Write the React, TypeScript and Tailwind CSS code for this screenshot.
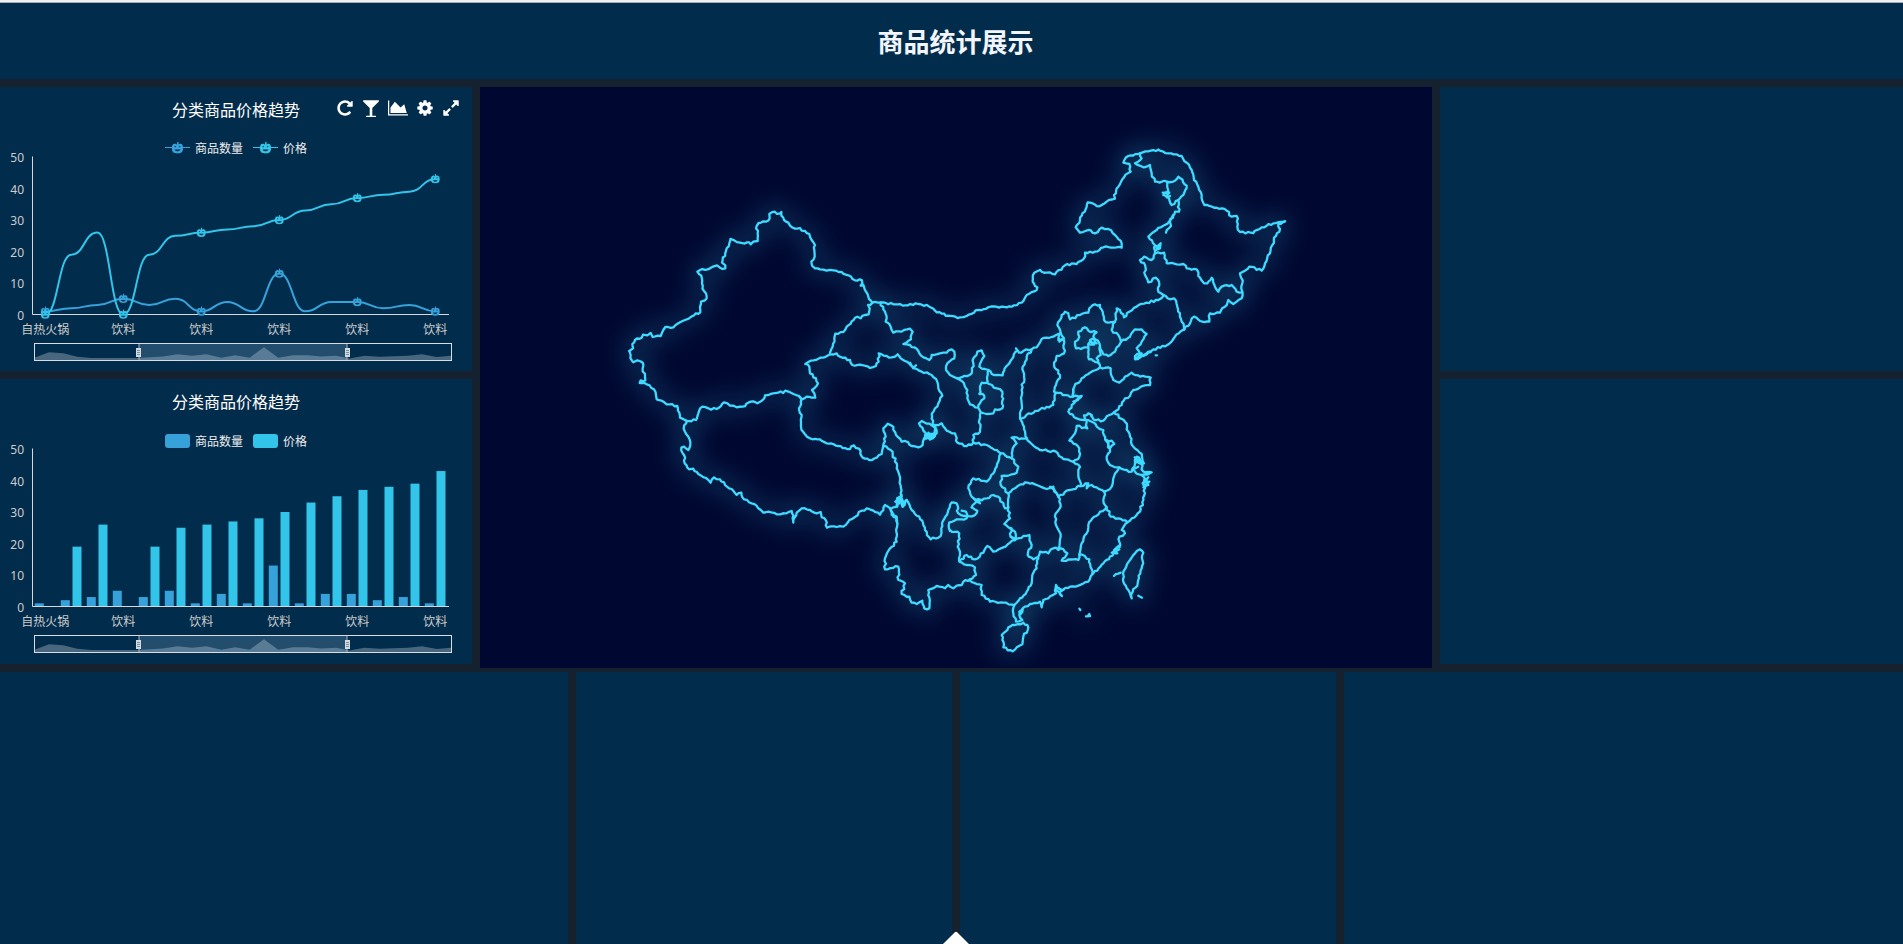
import React, { useState } from "react";

type Series = { name: string; color: string; values: number[] };

const SERIES: Series[] = [
  { name: "商品数量", color: "#37a2da", values: [1, 2, 3, 5, 3, 5, 1, 4, 1, 13, 1, 4, 4, 2, 3, 1] },
  { name: "价格", color: "#32c5e9", values: [0, 19, 26, 0, 19, 25, 26, 27, 28, 30, 33, 35, 37, 38, 39, 43] },
];
const LABELS = ["自热火锅", "饮料", "饮料", "饮料", "饮料", "饮料"];
const TICKS = [0, 10, 20, 30, 40, 50];

const BASE = 227.5;
const px = (i: number) => 45.3 + i * 26;
const py = (v: number) => BASE - v * 3.15;

/* ---------- toolbar icons ---------- */

const ICONS = [
  {
    label: "刷新",
    box: "0 0 1792 1792",
    cls: "w-[18px]",
    d: "M1664 256v448q0 26-19 45t-45 19h-448q-42 0-59-40-17-39 14-69l138-138q-148-137-349-137-104 0-198.500 40.500t-163.500 109.500-109.500 163.500-40.500 198.500 40.500 198.500 109.500 163.500 163.500 109.500 198.500 40.500q119 0 225-52t179-147q7-10 23-12 15 0 25 9l137 138q9 8 9.500 20.500t-7.500 22.500q-109 132-264 204.500t-327 72.500q-156 0-298-61t-245-164-164-245-61-298 61-298 164-245 245-164 298-61q147 0 284.500 55.500t244.500 156.500l130-129q29-31 70-14 39 17 39 59z",
  },
  {
    label: "筛选",
    box: "0 0 1792 1792",
    cls: "w-[18px]",
    d: "M1699 186q0 35-43 78l-632 632v768h320q26 0 45 19t19 45-19 45-45 19h-896q-26 0-45-19t-19-45 19-45 45-19h320v-768l-632-632q-43-43-43-78 0-23 18-36.500t38-17.500 43-4h1408q23 0 43 4t38 17.500 18 36.500z",
  },
  {
    label: "图表",
    box: "0 0 2048 1792",
    cls: "w-5",
    d: "M2048 1536v128h-2048v-1536h128v1408h1920zm-384-1024l256 896h-1664v-576l448-576 576 576z",
  },
  {
    label: "设置",
    box: "0 0 1792 1792",
    cls: "w-[18px]",
    d: "M1152 896q0-106-75-181t-181-75-181 75-75 181 75 181 181 75 181-75 75-181zm512-109v222q0 12-8 23t-20 13l-185 28q-19 54-39 91 35 50 107 138 10 12 10 25t-9 23q-27 37-99 108t-94 71q-12 0-26-9l-138-108q-44 23-91 38-16 136-29 186-7 28-36 28h-222q-14 0-24.500-8.500t-11.500-21.500l-28-184q-49-16-90-37l-141 107q-10 9-25 9-14 0-25-11-126-114-165-168-7-10-7-23 0-12 8-23 15-21 51-66.500t54-70.500q-27-50-41-99l-183-27q-13-2-21-12.500t-8-23.500v-222q0-12 8-23t19-13l186-28q14-46 39-92-40-57-107-138-10-12-10-24 0-10 9-23 26-36 98.500-107.500t94.500-71.500q13 0 26 10l138 107q44-23 91-38 16-136 29-186 7-28 36-28h222q14 0 24.500 8.500t11.500 21.500l28 184q49 16 90 37l142-107q9-9 24-9 13 0 25 10 129 119 165 170 7 8 7 22 0 12-8 23-15 21-51 66.500t-54 70.500q26 50 41 98l183 28q13 2 21 12.500t8 23.500z",
  },
  {
    label: "全屏",
    box: "0 0 1792 1792",
    cls: "w-[18px]",
    d: "M883 1056q0 13-10 23l-332 332 144 144q19 19 19 45t-19 45-45 19h-448q-26 0-45-19t-19-45v-448q0-26 19-45t45-19 45 19l144 144 332-332q10-10 23-10t23 10l114 114q10 10 10 23zm781-864v448q0 26-19 45t-45 19-45-19l-144-144-332 332q-10 10-23 10t-23-10l-114-114q-10-10-10-23t10-23l332-332-144-144q-19-19-19-45t19-45 45-19h448q26 0 45 19t19 45z",
  },
];

function Toolbar() {
  return (
    <div className="flex items-center gap-2">
      {ICONS.map((icon) => (
        <button key={icon.label} type="button" aria-label={icon.label} className="flex cursor-pointer items-center justify-center">
          <svg viewBox={icon.box} className={`h-[18px] fill-white ${icon.cls}`}>
            <path d={icon.d} />
          </svg>
        </button>
      ))}
    </div>
  );
}

/* ---------- charts ---------- */

/* Pumpkin-shaped data marker, centred on (x, y). */
function Pumpkin({ x, y, color, scale = 1 }: { x: number; y: number; color: string; scale?: number }) {
  return (
    <g transform={`translate(${x} ${y}) scale(${scale})`}>
      <path d="M-0.6 -2.6 L-0.2 -5.2 L0.9 -5 L0.8 -2.6 Z" fill={color} />
      <path
        d="M-2.6 -3.6 C-5.2 -3.6 -5.4 2.6 -3 4 C-1.6 4.7 1.6 4.7 3 4 C5.4 2.6 5.2 -3.6 2.6 -3.6 C1.4 -3.8 0.8 -3 0 -3 C-0.8 -3 -1.4 -3.8 -2.6 -3.6 Z"
        fill={color}
      />
      <path d="M-2.6 -1.6 h1.5 l-0.8 1.2 z M1.1 -1.6 h1.5 l-0.8 1.2 z M-2.5 1.2 h5 q-1 1.6 -2.500 1.6 t-2.500 -1.6 z" fill="#022c4c" />
    </g>
  );
}

function smoothPath(values: number[]) {
  return values
    .map((v, i) => {
      if (i === 0) return `M${px(0)} ${py(v)}`;
      return `C${px(i - 1) + 13} ${py(values[i - 1])} ${px(i) - 13} ${py(v)} ${px(i)} ${py(v)}`;
    })
    .join(" ");
}

function Legend({ kind }: { kind: "line" | "bar" }) {
  const cy = kind === "line" ? 61 : 62;
  return (
    <g>
      {SERIES.map((s, k) => {
        const x = k === 0 ? 165 : 253;
        return (
          <g key={s.name}>
            {kind === "line" ? (
              <>
                <path d={`M${x} ${cy - 0.5} h25`} stroke={s.color} strokeWidth="1" />
                <Pumpkin x={x + 12.5} y={cy} color={s.color} scale={1.2} />
              </>
            ) : (
              <rect x={x} y={cy - 7} width="25" height="14" rx="3" fill={s.color} />
            )}
            <text x={x + 30} y={cy + 5} fontSize="12" fill="#eeeeee">
              {s.name}
            </text>
          </g>
        );
      })}
    </g>
  );
}

const SHADOW =
  "0,42 42,26 85,29 127,40 170,44 310,44 385,39 428,32 472,37 515,32 560,43 602,35 645,43 688,10 731,43 775,35 820,35 860,39 905,37 945,45 990,37 1035,40 1120,37 1163,32 1207,41 1250,37 1250,50 0,50";

const THUMB =
  "pointer-events-none absolute top-0 -left-[3px] m-0 h-full w-[calc(100%+6px)] appearance-none bg-transparent [&::-webkit-slider-thumb]:pointer-events-auto [&::-webkit-slider-thumb]:h-[9px] [&::-webkit-slider-thumb]:w-[5px] [&::-webkit-slider-thumb]:cursor-ew-resize [&::-webkit-slider-thumb]:appearance-none [&::-webkit-slider-thumb]:border [&::-webkit-slider-thumb]:border-[#d3dbe0] [&::-webkit-slider-thumb]:bg-[repeating-linear-gradient(#d3dbe0_0px,#d3dbe0_1px,#7c8d9b_1px,#7c8d9b_2px)]";

function ZoomSlider() {
  const [from, setFrom] = useState(25);
  const [to, setTo] = useState(75);
  return (
    <div className="relative mr-5 ml-[34px] h-[18px] border border-[#d8dde1]">
      <svg viewBox="0 0 1250 50" preserveAspectRatio="none" className="block h-full w-full">
        <polygon points={SHADOW} fill="#d8dde1" opacity="0.33" />
        <rect x={from * 12.5} y="0" width={(to - from) * 12.5} height="50" fill="#a7d2f5" opacity="0.2" />
        <path
          d={`M${from * 12.5} 0 V50 M${to * 12.5} 0 V50`}
          stroke="#a7b7c4"
          strokeWidth="1"
          vectorEffect="non-scaling-stroke"
        />
      </svg>
      <input
        type="range"
        aria-label="起始"
        min={0}
        max={100}
        value={from}
        onChange={(e) => setFrom(Math.min(Number(e.target.value), to))}
        className={THUMB}
      />
      <input
        type="range"
        aria-label="结束"
        min={0}
        max={100}
        value={to}
        onChange={(e) => setTo(Math.max(Number(e.target.value), from))}
        className={THUMB}
      />
    </div>
  );
}

function ChartPanel({ kind }: { kind: "line" | "bar" }) {
  return (
    <section className="flex flex-col bg-[#022c4c]">
      <div className="grid h-[46px] grid-cols-[1fr_auto_1fr] items-center">
        <span />
        <h2 className="text-base leading-6 text-white">分类商品价格趋势</h2>
        <div className="flex justify-end pr-3 pb-1">{kind === "line" && <Toolbar />}</div>
      </div>
      <svg viewBox="0 46 472 210" className="block w-full">
        {kind === "bar" &&
          SERIES.map((s, k) =>
            s.values.map((v, i) => (
              <rect key={`${k}-${i}`} x={px(i) - 10.5 + k * 11.7} y={py(v)} width="9" height={BASE - py(v)} fill={s.color} />
            )),
          )}
        <path d="M32.5 69.500 V227.500 H449" fill="none" stroke="#d8d8d8" strokeWidth="1" />
        {TICKS.map((t) => (
          <text key={t} x="24" y={py(t) + 5} textAnchor="end" fontSize="12" fill="#cccccc">
            {t}
          </text>
        ))}
        {LABELS.map((label, i) => (
          <text key={i} x={px(i * 3)} y="247" textAnchor="middle" fontSize="12" fill="#cccccc">
            {label}
          </text>
        ))}
        {kind === "line" &&
          SERIES.map((s) => (
            <g key={s.name}>
              <path d={smoothPath(s.values)} fill="none" stroke={s.color} strokeWidth="2" />
              {[0, 3, 6, 9, 12, 15].map((i) => (
                <Pumpkin key={i} x={px(i)} y={py(s.values[i])} color={s.color} scale={0.95} />
              ))}
            </g>
          ))}
        <Legend kind={kind} />
      </svg>
      <ZoomSlider />
    </section>
  );
}

/* ---------- map ---------- */

/* Border lines, grouped in tiles; each tile is stored at three times its drawn size. */
const TILES: { x: number; y: number; lines: string[] }[] = [
  {
    x: 620,
    y: 190,
    lines: [
      "757,338 745,320 738,305 730,285 722,287 726,271 705,271 685,256 665,246 640,241 620,242 600,238 585,235 576,227 574,215 584,200 583,180 585,165 575,150 568,132 555,123 545,122 540,114 525,116 510,107 505,98 492,90 484,77 484,66 480,70 455,67 448,72 449,85 438,95 416,99 410,108 413,130 413,153 400,155 392,163 388,157 360,158 343,151 332,147",
      "332,147 328,160 318,183 308,210 306,218 316,226 316,235 300,233 291,226 270,235 240,240 232,245 237,252 244,257 246,280 252,303 260,318 255,331 243,335 240,350 241,367 215,379 195,390 175,400 160,412 136,411 130,420 122,438 98,441 92,429 82,436 69,434 65,443 45,450 37,462 39,475 28,483",
      "28,483 32,495 36,512 40,517 52,511 69,519 68,535 75,560 76,571 62,571 59,579 80,583 102,598 108,615 110,628 125,632 140,643 172,648 178,668 180,683 200,693",
      "200,693 228,690 235,670 247,650 265,655 290,657 312,637 330,647 350,652 368,650 385,638 400,634 412,640 428,630 435,616 455,611 475,608 503,604 520,612 537,618 545,628 560,620 575,623 586,623 583,610 576,600 594,580 588,565 570,550 568,530 556,522 565,516 595,506 630,493",
      "630,488 638,470 643,445 646,431 670,426 680,410 695,394 712,380 722,385 735,375 746,373 749,355 744,345 757,338",
      "200,693 193,705 195,725 205,740 211,765 205,780 192,770 184,773 192,795 194,820 207,838 220,836 235,852 258,864 272,878 282,862 300,868 315,885 335,897 350,915 364,908 372,928 395,940 415,955 430,968 445,965 470,973 490,970",
      "490,970 515,963 520,998 530,968 545,955 570,960 590,970 602,966 605,982 617,990 621,1013 650,1011 670,1010 688,990 705,981 725,962 740,955 760,962 780,974 795,945 812,956 830,950 832,925 845,920",
      "537,618 545,628 537,655 545,675 543,710 555,733 570,745 600,748 620,760 655,768 690,777 702,766 722,783 728,803 748,810 770,803 785,792 790,768",
      "790,768 797,740 790,715 803,701 820,710 828,735 845,755 865,757 875,768 895,772 908,765 912,745 925,740 930,748",
      "932,738 910,722 897,700 905,693 935,706 944,712",
      "630,493 650,490 660,500 690,510 697,525 725,525 750,534 768,528 776,515 776,490 800,498 815,502 833,493 855,513 878,530 905,545 935,555 952,575 955,595 967,617 955,640 945,655 935,672 938,700 946,715 945,738 930,748",
      "870,518 880,535 888,526",
      "912,748 925,728 935,745 945,735",
      "790,768 812,780 830,820 838,855 842,910 848,945 860,930",
      "812,956 820,980 830,985 832,1000",
      "832,925 838,940 826,935 845,915",
    ],
  },
  {
    x: 840,
    y: 270,
    lines: [
      "97,98 122,97 160,103 195,106 235,102 268,110 285,122 325,137 360,142 380,138 415,120 445,112 485,110 515,110 545,98 560,75 590,60 592,52 578,35 583,8 600,0",
      "122,98 130,118 140,145 137,155 152,170 160,188 185,185 210,176 218,185 213,208 190,222 210,225 235,243 250,262 268,270 275,255 300,250 320,248 335,238 343,245 343,265 322,280 318,300 330,315 352,325",
      "352,325 372,318 395,310 400,280 402,262 412,245 425,241 433,258 423,275 418,290 435,297 445,300 443,335",
      "352,325 372,340 382,360 382,385 390,403 415,413 420,400 433,385 428,372 418,372 420,350 425,338 440,338 470,355 487,365 487,415 465,418 460,430 440,432 422,427 415,413",
      "445,300 455,312 488,316 498,290 515,268 532,242 528,235 537,248 550,243 575,238 595,225 605,207 640,200 662,190",
      "188,710 200,690 215,720 238,740 255,780 272,808 302,798 306,760 325,720 335,697 350,700 355,730 380,738 405,735 412,722 395,712",
      "170,750 170,740 155,735 150,716",
      "172,710 178,690 185,685 188,710",
      "330,783 328,757 350,748 380,745 378,725 365,722",
      "655,835 662,800 650,770 645,740 662,710 655,680 650,670 630,650",
      "505,670 525,655 555,637 590,645 620,657 640,650 643,665 655,680",
      "655,680 690,660 722,648 745,640 740,655 755,645 770,652 793,665",
      "793,665 790,690 800,712 812,740 835,745 862,757",
      "793,665 815,650 820,625 838,592 860,600 875,605 885,580",
      "718,855 725,820 740,790 745,765 757,745 780,725 800,712",
      "838,592 810,585 800,560 810,545 800,510 815,512 823,522 812,532 800,515 790,480 770,470 755,455 735,450",
      "740,455 742,475 710,468 705,490 688,512 718,535 718,560 700,575",
      "700,575 720,590 715,610 722,648",
      "700,575 670,567 648,545 600,540 575,522 560,505",
      "560,505 552,470 540,445 545,400 545,360 552,320 548,290 560,260 575,238",
      "540,445 600,418 640,405 648,368",
      "662,190 672,205 658,215",
      "648,368 698,380 700,360",
      "698,380 725,378 702,400 685,425 710,445 735,450 732,436 745,430 755,440",
      "700,395 715,385 708,392 722,382",
      "755,435 760,448 790,452 808,435 822,427",
      "560,505 515,503 530,520 518,535 515,565 490,550 482,550",
      "515,565 535,590 530,608 485,618 482,645 505,670",
      "482,550 475,575 460,610 440,635 400,625 385,655 395,680 410,695 395,712",
      "400,685 420,700 405,690 425,690",
      "410,695 440,685 460,675 480,685 495,715 505,712 505,670",
      "505,712 510,745 493,762 515,775 512,800 527,805 525,785 512,778",
      "268,500 290,490 285,465 305,460 320,482 345,490 352,518 380,528 400,518 440,525 482,550",
      "255,495 285,490 265,505 280,495",
      "400,518 400,495 420,485 418,450 422,428",
      "780,292 812,295 820,330 838,338 855,320 875,308 900,320 932,323 930,345 900,352 880,360 870,378 855,385 845,405 822,427",
      "822,427 855,455 870,500 880,530 905,552 912,580 890,560 885,580 900,572 910,605 935,607 905,615 885,605 880,598 895,590",
      "905,615 920,630 908,640 928,635 910,652 915,655 910,690 900,725 875,745 862,757 845,780 855,790 838,800 840,830 822,840 832,850 820,850 790,880 760,910",
      "925,622 912,630 925,645 910,645",
      "884,562 900,568 890,575 908,582",
      "840,825 815,848 838,838",
      "900,838 910,848 905,895 893,940 878,965 875,985 865,960 850,935 850,905 870,870 885,850 900,838",
      "822,918 842,908",
      "895,977 906,983",
    ],
  },
  {
    x: 1040,
    y: 140,
    lines: [
      "0,390 20,398 45,403 75,376 110,372 130,358 135,338 165,335 190,322 245,323 245,310 225,285 205,267 185,263 165,280 145,270 120,278 107,262 120,240 143,187 178,199 200,185 225,176 222,165 235,140 252,112 272,95 268,72 250,68 265,48 300,40 325,34 355,29",
      "355,29 385,40 425,48 440,68 455,90 462,120 475,140 485,165 493,195 530,203 560,212 575,230 590,228 592,260 600,276 640,279 665,262 700,250 735,244",
      "735,244 715,252 718,275 702,293 697,315 690,340 675,370 665,392 628,380 600,400 607,430 607,455 605,475 590,485 580,492 565,480 555,500 540,518 510,520 508,545 480,543 462,530 450,550 433,568",
      "345,340 372,338 380,370 410,373 430,372 440,385 470,388 475,408 492,430 502,430 515,413 525,440 535,455 545,440 575,435 590,455 607,457",
      "300,40 305,55 285,70 310,82 330,75 335,100 345,125 380,125 405,122 415,110 440,137 430,165 415,180 395,195 387,175 370,165 385,155 382,125",
      "368,158 388,158 380,172 390,168",
      "415,180 417,215 405,215 395,235 387,245 350,270 325,290 345,315 345,340",
      "400,225 390,245 393,258 378,278",
      "345,320 362,310 360,325 348,330 358,316",
      "345,340 335,360 312,350 300,360 315,375 315,405 325,427 347,413 358,435 355,455 370,465",
      "370,465 390,478 402,475 412,500 420,520 425,545 433,568",
      "370,465 355,480 320,488 290,500 268,515 252,532 240,510 230,505 225,545 205,548 192,540 188,515 180,495 165,493 148,505 145,518 120,525 90,538 85,520 75,515 65,525 52,555 62,580",
      "433,568 405,590 382,615 340,628 310,645 285,658 285,648 300,640 290,625 305,605 320,582 305,568 285,568 270,590 243,605",
      "288,655 305,640 300,652 332,636",
      "347,646 351,646",
      "225,545 215,570 235,585 243,605 230,622 225,635 205,648 190,643 180,620",
      "135,562 115,575 118,590 105,605 108,625 145,622 150,605 170,610 160,590 170,577 145,572 135,562",
      "145,622 147,658 175,668 170,655 182,645 178,610 165,598 150,600 162,614 150,614",
      "175,668 180,682 150,698 125,715 103,740 98,765",
      "62,580 55,600 72,600 72,640 50,648 42,675 60,705 48,735 42,755 48,760",
    ],
  },
  {
    x: 860,
    y: 520,
    lines: [
      "697,162 685,185 655,197 630,200 605,212 588,195 588,220 565,235 550,240 545,262 540,245 510,252 488,265 478,285 487,300 468,305 460,280 463,255",
      "590,205 612,208 598,218 606,228 590,212",
      "478,275 488,268 482,282",
      "490,308 502,315 503,330 490,350 487,373 470,382 458,394 430,382 425,345 445,322 465,315 490,308",
      "463,255 480,235 500,215 515,190 517,165 530,145 535,115",
      "463,255 430,248 390,245 365,225 362,205 365,195 330,182 330,178",
      "330,178 310,185 305,195 290,197 280,205 265,195 255,205 230,198 205,210 208,265 193,265 187,242 170,252 155,248 148,230 125,222 135,190 115,180 115,140 75,148 75,115 90,85 110,65 111,0",
      "330,178 348,165 345,142 320,135 298,125 300,105 293,80 298,40 270,30",
      "298,122 320,105 345,118 370,98 382,78 400,95 430,82 450,68 465,60 452,50",
      "465,60 490,48 508,45 515,75 503,105 520,118 535,110 540,95 565,100 580,85 610,88 622,100 605,122 640,118 655,120 658,103 688,118 697,162",
      "658,266 661,270",
      "678,289 690,288 688,282 684,287",
    ],
  },
];

/* Turns a border line into path data, with small deterministic wiggles between its vertices. */
function borderPath(line: string, originX: number, originY: number, seed: number) {
  let s = (seed * 7919 + 13) % 233280;
  const rnd = () => {
    s = (s * 9301 + 49297) % 233280;
    return s / 233280 - 0.5;
  };
  const pts = line.split(" ").map((p) => {
    const [x, y] = p.split(",").map(Number);
    return [originX + x / 3, originY + y / 3];
  });
  const at = (x: number, y: number) => `${x.toFixed(2)} ${y.toFixed(2)}`;
  const out: string[] = [`M${at(pts[0][0], pts[0][1])}`];
  for (let i = 1; i < pts.length; i++) {
    const [ax, ay] = pts[i - 1];
    const [bx, by] = pts[i];
    const len = Math.hypot(bx - ax, by - ay);
    const n = Math.floor(len / 2.3);
    for (let k = 1; k < n; k++) {
      const t = k / n;
      const off = rnd() * 2.2;
      out.push(`L${at(ax + (bx - ax) * t - ((by - ay) / len) * off, ay + (by - ay) * t + ((bx - ax) / len) * off)}`);
    }
    out.push(`L${at(bx, by)}`);
  }
  return out.join("");
}

const BORDERS = TILES.flatMap((tile, t) => tile.lines.map((line, i) => borderPath(line, tile.x, tile.y, t * 50 + i + 1)));

function Borders({ width }: { width: number }) {
  return (
    <g fill="none" stroke="#3fdaff" strokeWidth={width} strokeLinejoin="round" strokeLinecap="round">
      {BORDERS.map((d, i) => (
        <path key={i} d={d} />
      ))}
    </g>
  );
}

function ChinaMap() {
  return (
    <section className="bg-[#000831]">
      <svg viewBox="480 87 952 581" className="block h-full w-full" role="img">
        <defs>
          <filter id="glow" filterUnits="userSpaceOnUse" x="480" y="87" width="952" height="581">
            <feGaussianBlur stdDeviation="13" />
          </filter>
        </defs>
        <g filter="url(#glow)" opacity="0.4">
          <Borders width={6} />
        </g>
        <Borders width={2.3} />
      </svg>
    </section>
  );
}

/* ---------- page ---------- */

export default function App() {
  return (
    <div className="relative flex min-h-screen flex-col overflow-hidden bg-[#15212f] font-['Noto_Sans','Noto_Sans_CJK_SC',sans-serif]">
      <div className="h-[3px] border-b border-[#a9adb3] bg-[#f1f1f1]" />
      <header className="flex h-[76px] items-center justify-center bg-[#022c4c] pt-0.5 pl-2">
        <h1 className="text-[26px] leading-9 font-bold text-[#f2f6fc]">商品统计展示</h1>
      </header>
      <main className="mt-2 grid grid-cols-[minmax(0,472fr)_minmax(0,952fr)_minmax(0,463fr)] gap-2">
        <div className="grid grid-rows-[284fr_285fr] gap-2 pb-1">
          <ChartPanel kind="line" />
          <ChartPanel kind="bar" />
        </div>
        <ChinaMap />
        <div className="grid grid-rows-[284fr_285fr] gap-2 pb-1">
          <section className="bg-[#022c4c]" />
          <section className="bg-[#022c4c]" />
        </div>
      </main>
      <div className="mt-1 grid flex-1 grid-cols-[minmax(0,568fr)_minmax(0,376fr)_minmax(0,376fr)_minmax(0,559fr)] gap-2">
        <section className="bg-[#022c4c]" />
        <section className="bg-[#022c4c]" />
        <section className="bg-[#022c4c]" />
        <section className="bg-[#022c4c]" />
      </div>
      <div className="absolute inset-x-0 -bottom-4 flex justify-center pl-2">
        <button type="button" aria-label="展开" className="size-6 rotate-45 cursor-pointer rounded-xs bg-white" />
      </div>
    </div>
  );
}
